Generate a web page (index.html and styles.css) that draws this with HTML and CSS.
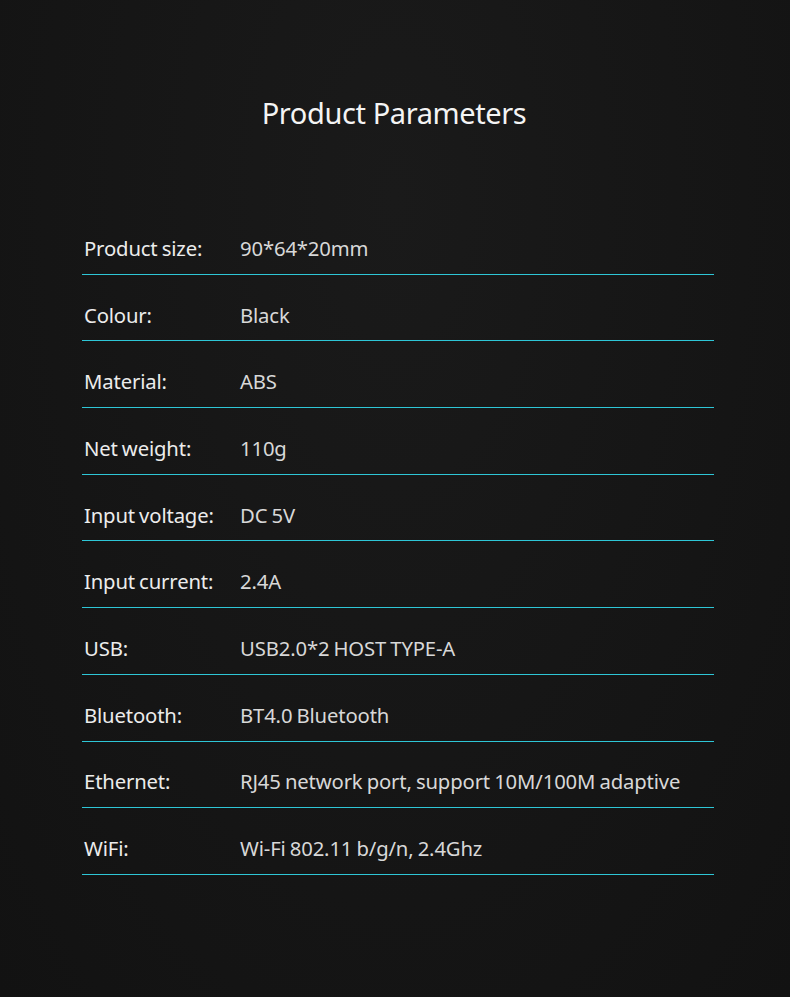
FILE: index.html
```html
<!DOCTYPE html>
<html>
<head>
<meta charset="utf-8">
<link rel="stylesheet" href="styles.css">
</head>
<body>
<main class="page">
  <h1 class="title">Product Parameters</h1>
  <div class="params">
    <div class="row"><span class="label">Product size:</span><span class="value">90*64*20mm</span></div>
    <div class="row"><span class="label">Colour:</span><span class="value">Black</span></div>
    <div class="row"><span class="label">Material:</span><span class="value">ABS</span></div>
    <div class="row"><span class="label">Net weight:</span><span class="value">110g</span></div>
    <div class="row"><span class="label">Input voltage:</span><span class="value">DC 5V</span></div>
    <div class="row"><span class="label">Input current:</span><span class="value">2.4A</span></div>
    <div class="row"><span class="label">USB:</span><span class="value">USB2.0*2 HOST TYPE-A</span></div>
    <div class="row"><span class="label">Bluetooth:</span><span class="value">BT4.0 Bluetooth</span></div>
    <div class="row"><span class="label">Ethernet:</span><span class="value">RJ45 network port, support 10M/100M adaptive</span></div>
    <div class="row"><span class="label">WiFi:</span><span class="value">Wi-Fi 802.11 b/g/n, 2.4Ghz</span></div>
  </div>
</main>
</body>
</html>
```

FILE: styles.css
```css
html, body {
  margin: 0;
  padding: 0;
}
body {
  width: 790px;
  height: 997px;
  overflow: hidden;
  background: radial-gradient(ellipse at 50% 20%, #1a1a1a 0%, #161616 50%, #121212 100%);
  font-family: "Noto Sans", "Open Sans", sans-serif;
  color: #e6e6e6;
}
.page {
  display: flex;
  flex-direction: column;
  padding-top: 93px;
}
.title {
  margin: 0;
  text-align: center;
  padding-right: 2px;
  font-size: 29px;
  letter-spacing: -0.4px;
  font-weight: 400;
  line-height: 40px;
  color: #f4f4f4;
}
.params {
  margin: 75px 0 0 82px;
  width: 632px;
  display: flex;
  flex-direction: column;
}
.row {
  display: flex;
  align-items: center;
  height: 51.7px;
  padding-top: 14px;
  border-bottom: 1px solid #2ec6d6;
  font-size: 20.3px;
  letter-spacing: -0.15px;
  word-spacing: -1px;
}
.label {
  width: 158px;
  flex: none;
  padding-left: 2px;
  box-sizing: border-box;
  color: #ececec;
}
.value {
  color: #d8d8d8;
}
```
